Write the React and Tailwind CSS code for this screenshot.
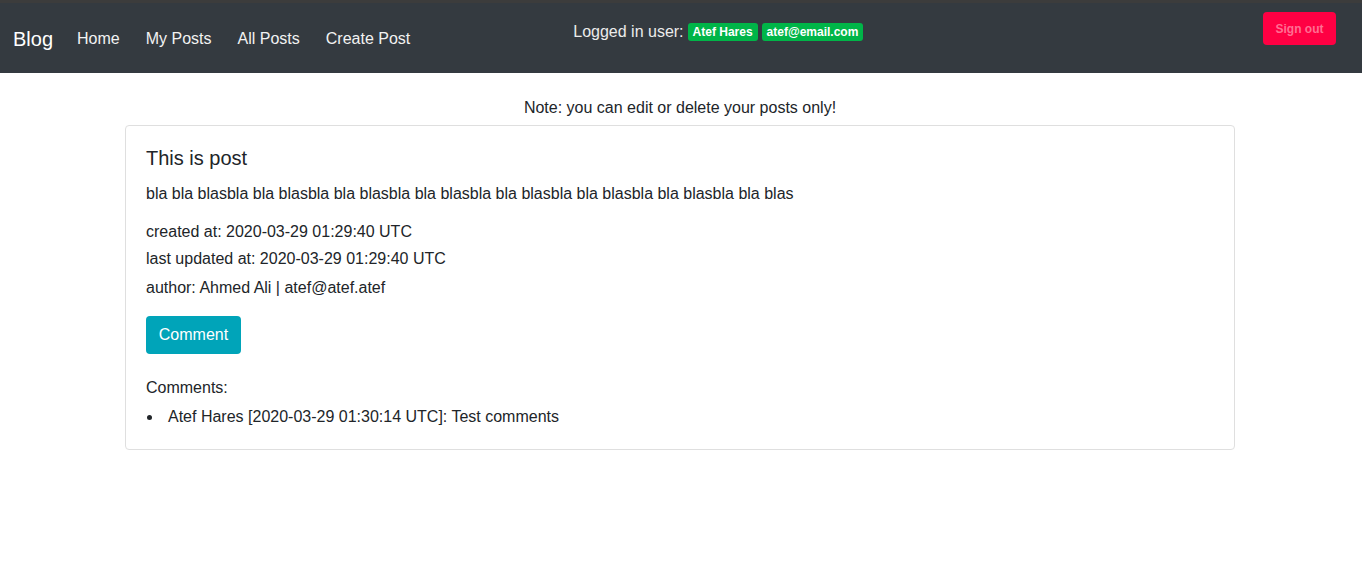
export default function App() {
  const font = { fontFamily: '"Liberation Sans", Arial, sans-serif' };
  return (
    <div style={font} className="min-h-[588px] bg-white text-[#212529]">
      <div className="h-[3px] bg-[#3c3c3c]" />
      <nav className="flex h-[70px] items-center bg-[#343a40] pl-[13px] pt-[2px]">
        <span className="mr-[11px] text-[20px] leading-[24px] text-white">Blog</span>
        <div className="flex items-center text-[16px] leading-[24px] text-[#f2f2f2]">
          <a className="px-[13px]">Home</a>
          <a className="px-[13px]">My Posts</a>
          <a className="px-[13px]">All Posts</a>
          <a className="px-[13px]">Create Post</a>
        </div>
        <div className="ml-[150px] mt-[15px] flex h-[24px] items-center gap-[4px] self-start">
          <span className="text-[16px] leading-[24px] text-[#ececec]">Logged in user:</span>
          <span className="rounded-[3px] bg-[#00b548] px-[5px] py-[3px] text-[12px] font-bold leading-[12px] text-white">Atef Hares</span>
          <span className="rounded-[3px] bg-[#00b548] px-[5px] py-[3px] text-[12px] font-bold leading-[12px] text-white">atef@email.com</span>
        </div>
        <button className="ml-auto mr-[26px] mt-[7px] flex h-[33px] w-[73px] items-center justify-center self-start rounded-[4px] bg-[#ff0043] text-[12px] font-bold text-[#ff6f92]">
          Sign out
        </button>
      </nav>
      <div className="ml-[125px] w-[1110px]">
        <p className="mt-[23px] text-center text-[16px] leading-[24px]">Note: you can edit or delete your posts only!</p>
        <div className="mt-[5px] rounded-[4px] border border-[#dfdfdf] p-[20px] text-[16px] leading-[24px]">
          <h5 className="text-[20px] leading-[24px]">This is post</h5>
          <p className="mt-[12px]">bla bla blasbla bla blasbla bla blasbla bla blasbla bla blasbla bla blasbla bla blasbla bla blas</p>
          <p className="mt-[14px]">created at: 2020-03-29 01:29:40 UTC</p>
          <p className="mt-[3px]">last updated at: 2020-03-29 01:29:40 UTC</p>
          <p className="mt-[5px]">author: Ahmed Ali | atef@atef.atef</p>
          <button className="mt-[16px] h-[38px] w-[95px] rounded-[4px] bg-[#00a4b9] text-[16px] text-white">Comment</button>
          <p className="mt-[22px]">Comments:</p>
          <ul className="mt-[5px]">
            <li className="flex items-center">
              <span className="ml-[1px] mr-[16px] h-[5px] w-[5px] rounded-full bg-[#212529]" />
              <span>Atef Hares [2020-03-29 01:30:14 UTC]: Test comments</span>
            </li>
          </ul>
        </div>
      </div>
    </div>
  );
}
